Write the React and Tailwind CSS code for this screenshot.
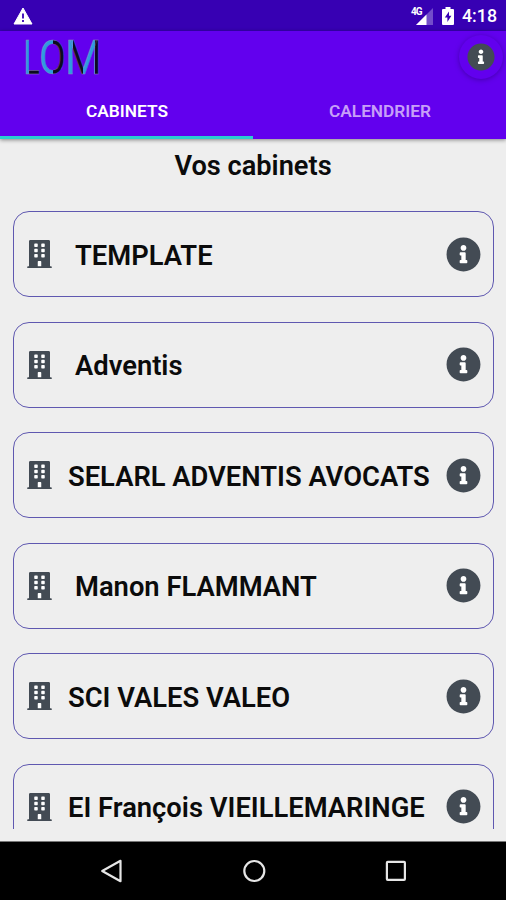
import React, { useState } from 'react';
import { FaBuilding, FaInfoCircle } from 'react-icons/fa';

const cabinets = [
  { id: 1, name: 'TEMPLATE', indent: true },
  { id: 2, name: 'Adventis', indent: true },
  { id: 3, name: 'SELARL ADVENTIS AVOCATS' },
  { id: 4, name: 'Manon FLAMMANT', indent: true },
  { id: 5, name: 'SCI VALES VALEO' },
  { id: 6, name: 'EI François VIEILLEMARINGE' },
];

const tabs = ['CABINETS', 'CALENDRIER'];

function StatusBar() {
  return (
    <div className="h-[31px] shrink-0 bg-[#3700b3] text-white flex items-center justify-between pl-[13px] pr-[9px] pt-px">
      <svg className="w-[20px] h-[18px]" viewBox="0 0 20 18">
        <path d="M10 1 L19 17 H1 Z" fill="#fff" stroke="#fff" strokeWidth="1" strokeLinejoin="round" />
        <path d="M10 6.5 V11.5 M10 13 V15" stroke="#3700b3" strokeWidth="1.8" />
      </svg>
      <div className="flex items-center">
        <svg className="w-[23px] h-[20px] overflow-visible" viewBox="0 0 23 20">
          <path d="M5 19 L22 2 V19 Z" fill="#fff" fillOpacity="0.3" />
          <path d="M5 19 L15.5 8.5 V19 Z" fill="#fff" />
          <text x="0" y="9" fill="#fff" fontSize="10" fontWeight="700" fontFamily="Roboto, sans-serif" textLength="11.5">4G</text>
        </svg>
        <svg className="w-[12px] h-[18px] ml-[8px]" viewBox="0 0 12 18">
          <path d="M3.5 0 H8.5 V2 H11 Q12 2 12 3 V17 Q12 18 11 18 H1 Q0 18 0 17 V3 Q0 2 1 2 H3.5 Z" fill="#fff" />
          <path d="M7 4.5 L2.8 10.5 H5.4 V15 L9.4 8.8 H7 Z" fill="#3700b3" />
        </svg>
        <span className="ml-[8px] text-[17.8px] leading-none font-medium">4:18</span>
      </div>
    </div>
  );
}

function Logo() {
  return (
    <svg className="w-[80px] h-[42px] overflow-visible" viewBox="22 35 80 42" fontFamily="Roboto, sans-serif" fontSize="49" fontWeight="400" stroke="#8f86b8" strokeWidth="0.35">
      <defs>
        <linearGradient id="l" gradientUnits="userSpaceOnUse" x1="0" x2="26" y1="0" y2="0">
          <stop offset="0.33" stopColor="#2f9be0" />
          <stop offset="0.33" stopColor="#0c0a20" />
        </linearGradient>
        <linearGradient id="o" gradientUnits="userSpaceOnUse" x1="0" x2="34" y1="0" y2="0">
          <stop offset="0.52" stopColor="#2f9be0" />
          <stop offset="0.52" stopColor="#0c0a20" />
        </linearGradient>
        <linearGradient id="m" gradientUnits="userSpaceOnUse" x1="0" x2="43" y1="0" y2="0">
          <stop offset="0.22" stopColor="#2f9be0" />
          <stop offset="0.22" stopColor="#0c0a20" />
          <stop offset="0.5" stopColor="#0c0a20" />
          <stop offset="0.5" stopColor="#2f9be0" />
          <stop offset="0.82" stopColor="#2f9be0" />
          <stop offset="0.82" stopColor="#0c0a20" />
        </linearGradient>
      </defs>
      <text transform="translate(23.5 73.5) scale(0.62 1)" fill="url(#l)">L</text>
      <text transform="translate(39 73.5) scale(0.8 1)" fill="url(#o)">O</text>
      <text transform="translate(65 73.5) scale(0.86 1)" fill="url(#m)">M</text>
    </svg>
  );
}

function InfoIcon({ className, color }) {
  return (
    <span className={`relative flex items-center justify-center ${className}`}>
      <span className="absolute inset-[20%] rounded-full bg-white" />
      <FaInfoCircle className="relative w-full h-full" color={color} />
    </span>
  );
}

function CabinetCard({ cabinet }) {
  return (
    <div className="h-[86px] shrink-0 rounded-[16px] border border-[#5f58b0] flex items-center pl-[13px] pr-[12px]">
      <span className="relative flex shrink-0">
        <span className="absolute inset-x-[5px] top-[3px] bottom-[2px] bg-white" />
        <FaBuilding className="relative w-[25px] h-[28px]" color="#434b54" />
      </span>
      <span className={`flex-1 whitespace-nowrap text-[27.35px] leading-[32px] font-semibold text-[#0b0b0b] pt-[3px] ${cabinet.indent ? 'pl-[23px]' : 'pl-[16px]'}`}>
        {cabinet.name}
      </span>
      <InfoIcon className="w-[35px] h-[35px] shrink-0" color="#434b54" />
    </div>
  );
}

export default function App() {
  const [activeTab, setActiveTab] = useState('CABINETS');

  return (
    <div className="w-[506px] h-[900px] flex flex-col overflow-hidden bg-[#eeeeee] font-['Roboto',sans-serif]">
      <StatusBar />

      <header className="h-[108px] shrink-0 bg-[#6200ee] flex flex-col shadow-[0_1px_4px_rgba(0,0,0,0.45)]">
        <div className="h-[54px] flex items-start justify-between pl-[22px] pt-[4px]">
          <Logo />
          <button className="w-[44px] h-[44px] mr-[3px] rounded-full flex items-center justify-center shadow-[0_1px_5px_rgba(40,0,110,0.5)]">
            <InfoIcon className="w-[28px] h-[28px]" color="#434b54" />
          </button>
        </div>
        <div className="flex-1 flex">
          {tabs.map((tab) => (
            <button key={tab} onClick={() => setActiveTab(tab)}
              className={`flex-1 text-[17.3px] font-semibold border-b-3 pt-[2px] pl-px ${activeTab === tab ? 'text-white border-[#29cfd0]' : 'text-[#c79ff8] border-transparent'}`}>
              {tab}
            </button>
          ))}
        </div>
      </header>

      <main className="h-[690px] shrink-0 overflow-hidden flex flex-col">
        <h1 className="shrink-0 text-center text-[27.2px] leading-[32px] font-semibold text-[#0b0b0b] pt-[11px]">Vos cabinets</h1>
        <div className="flex flex-col gap-[24.6px] pl-[13px] pr-[12px] pt-[29px]">
          {cabinets.map((cabinet) => <CabinetCard key={cabinet.id} cabinet={cabinet} />)}
        </div>
      </main>

      <nav className="mt-auto h-[59px] shrink-0 bg-black border-t border-[#777777] flex items-center justify-between pl-[100px] pr-[99px]">
        <svg className="w-[24px] h-[26px]" viewBox="0 0 24 26">
          <path d="M2.2 13 L20.5 2.8 V23.2 Z" fill="none" stroke="#e6e6e6" strokeWidth="2.2" strokeLinejoin="round" />
        </svg>
        <svg className="w-[24px] h-[24px]" viewBox="0 0 24 24">
          <circle cx="11.3" cy="12" r="10" fill="none" stroke="#e6e6e6" strokeWidth="2.2" />
        </svg>
        <svg className="w-[22px] h-[22px]" viewBox="0 0 22 22">
          <rect x="1.9" y="1.9" width="18" height="18" rx="0.8" fill="none" stroke="#e6e6e6" strokeWidth="2.2" />
        </svg>
      </nav>
    </div>
  );
}
